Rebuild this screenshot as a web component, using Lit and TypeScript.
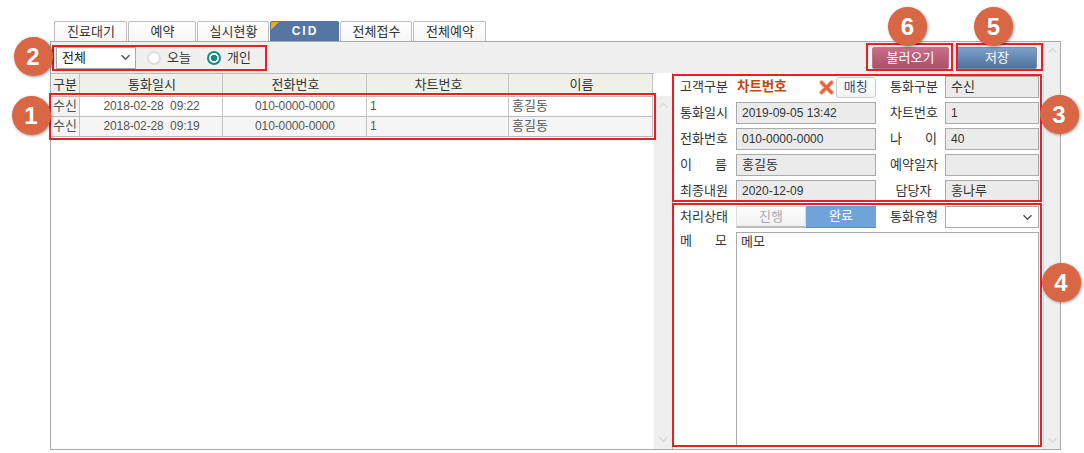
import { LitElement, html, css } from "lit";
import { customElement } from "lit/decorators.js";

const chev = (c: string) => html`<svg class="chev" width="11" height="7" viewBox="0 0 11 7"><path d="M1.5 1.2 5.5 5.2 9.5 1.2" fill="none" stroke="${c}" stroke-width="1.5"/></svg>`;
const chevUp = (c: string) => html`<svg class="chev" width="11" height="7" viewBox="0 0 11 7"><path d="M1.5 5.5 5.5 1.5 9.5 5.5" fill="none" stroke="${c}" stroke-width="1.3"/></svg>`;

const TABS = [["진료대기", 73], ["예약", 68], ["실시현황", 72], ["CID", 69], ["전체접수", 72], ["전체예약", 73]] as const;
const ROWS = [["수신", "2018-02-28  09:22", "010-0000-0000", "1", "홍길동"], ["수신", "2018-02-28  09:19", "010-0000-0000", "1", "홍길동"]];
const BOXES = [[49, 93, 607, 47], [52, 45, 215, 26], [672, 74, 370, 128], [672, 203, 370, 244], [956, 43, 87, 28], [866, 43, 87, 28]];
const DOTS = [[1, 31, 115], [2, 33, 56], [3, 1059, 114], [4, 1061, 282], [5, 993.5, 26], [6, 907.5, 26]];

@customElement("app-root")
export class AppRoot extends LitElement {
  static styles = css`
    :host { display: block; position: relative; width: 1084px; height: 453px; background: #fff; overflow: hidden;
      font: 13px/16px "Liberation Sans", "Noto Sans CJK KR", sans-serif; color: #333; }
    .tabs { display: flex; gap: 1px; padding: 21px 0 0 54px; height: 20px; }
    .tab { box-sizing: border-box; height: 20px; border: 1px solid #bdbdbd; border-bottom: 0; border-radius: 2px 2px 0 0; padding-left: 1px;
      background: linear-gradient(#fff, #f6f6f6); text-align: center; line-height: 19px; color: #333; position: relative; }
    .tab.on { background: #5676a2; border-color: #5676a2; color: #fff; font-size: 12px; font-weight: 700; letter-spacing: 2px; overflow: hidden; }
    .tri { position: absolute; left: -1px; top: -1px; width: 0; height: 0; border-top: 10px solid #eeaa22; border-right: 10px solid transparent; }
    .panel { box-sizing: border-box; display: flex; width: 1011px; height: 409px; margin-left: 50px; border: 1px solid #aaa; }
    .main { flex: 1; display: flex; flex-direction: column; min-width: 0; }
    .vbar { width: 17px; background: #efefef; border-left: 1px solid #d8d8d8; display: flex; flex-direction: column; justify-content: space-between; align-items: center; padding: 5px 0 5px; box-sizing: border-box; }
    .toolbar { height: 31px; background: #f0f0f0; display: flex; align-items: center; padding: 0 0 0 5px; box-sizing: border-box; }
    .sel { box-sizing: border-box; width: 80px; height: 22px; background: #fff; border: 1px solid #aaa; display: flex; align-items: center; justify-content: space-between; padding: 0 4px 0 5px; color: #222; }
    .radio { display: flex; align-items: center; gap: 6px; color: #333; }
    .r1 { margin-left: 11px; }
    .r2 { margin-left: 16px; }
    .dot { box-sizing: border-box; width: 14px; height: 14px; border-radius: 50%; border: 2px solid #dcdcdc; background: #fff; }
    .dot.on { border: 2px solid #138a86; background: radial-gradient(circle, #138a86 0 3px, #fff 3.5px); }
    .spacer { flex: 1; }
    .btn { box-sizing: border-box; height: 22px; border-radius: 2px; color: #fff; text-align: center; line-height: 20px; border: 1px solid #aaa; }
    .pink { width: 77px; background: linear-gradient(#cb6c88, #ac4f6b); border-color: #b5778a; }
    .blue { width: 80px; margin-left: 8px; margin-right: 6px; background: linear-gradient(#7ba0c9, #4f729e); border-color: #7c8fa8; }
    .body { flex: 1; display: flex; min-height: 0; }
    .list { width: 621px; display: flex; }
    .gridwrap { width: 603px; border-top: 1px solid #bbb; }
    .row { display: grid; grid-template-columns: 29px 143px 144px 142px 144px; }
    .row > div { box-sizing: border-box; border-right: 1px solid #c4c4c4; border-bottom: 1px solid #bbb; height: 20px; line-height: 18px; padding: 0 1px; text-align: center; color: #555; white-space: pre; }
    .row .n { font-size: 12px; letter-spacing: -0.12px; padding-left: 2px; }
    .row .l { text-align: left; padding-left: 3px; }
    .row .first { background: #f3f3f3; border-left: 0; padding: 0; }
    .row.alt > div { background: #f5f5f5; }
    .row.head > div { height: 23px; line-height: 21px; background: #eff0e9; color: #333; padding: 0 0 0 2px; }
    .row.head > div:first-child { padding: 0; }
    .lbar { width: 18px; margin-top: 23px; background: #efefef; display: flex; flex-direction: column; justify-content: space-between; align-items: center; padding: 6px 0 6px; box-sizing: border-box; }
    .form { box-sizing: border-box; flex: 1; border-left: 1px solid #aaa; display: grid; grid-template-columns: 63px 140px 69px 94px; grid-template-rows: 22px 22px 22px 22px 22px 22px 1fr; row-gap: 4px; padding: 3px 0 3px; align-items: center; }
    .lab { width: 47px; margin-left: 7px; text-align-last: justify; color: #333; white-space: nowrap; }
    .lab.rt { margin-left: 14px; }
    .lab.c { text-align-last: center; }
    .lab.top { align-self: start; margin-top: 1px; }
    .f { box-sizing: border-box; height: 22px; border: 1px solid #aaa; background: #ebebeb; line-height: 19px; padding: 0 5px; color: #333; }
    .f.n { font-size: 12px; line-height: 20px; }
    .w { background: #fff; display: flex; align-items: center; justify-content: flex-end; }
    .cust { display: flex; align-items: center; }
    .cust b { color: #c0490c; font-size: 13.5px; white-space: nowrap; margin-left: 1px; }
    .cust svg { margin-left: 32px; }
    .match { box-sizing: border-box; margin-left: 2px; width: 40px; height: 21px; border: 1px solid #ccc; border-radius: 3px; background: linear-gradient(#fff, #f4f4f4); color: #2a4a7e; text-align: center; line-height: 18px; }
    .toggle { display: flex; height: 22px; }
    .toggle div { width: 70px; box-sizing: border-box; text-align: center; line-height: 20px; }
    .off { background: linear-gradient(#fff, #f0f0f0); border: 1px solid #ddd; border-bottom: 2px solid #bbb; color: #aaa; }
    .act { background: #70a3da; color: #fff; border-bottom: 1px solid #5b8fc8; }
    .memo { grid-column: 2 / 5; box-sizing: border-box; align-self: stretch; border: 1px solid #aaa; background: #fff; padding: 0 4px; line-height: 17px; }
    .box { position: absolute; box-sizing: border-box; border: 2px solid #ee1c25; pointer-events: none; }
    .badge { position: absolute; width: 39px; height: 39px; margin: -19.5px 0 0 -19.5px; border-radius: 50%; background: #d96644; box-shadow: 1px 1px 3px rgba(0,0,0,.4); color: #fff; font: 700 24px/39px "Liberation Sans", sans-serif; text-align: center; }
  `;

  render() {
    return html`
      <div class="tabs">
        ${TABS.map(([t, w]) => html`<div class="tab ${t === "CID" ? "on" : ""}" style="width:${w}px">${t === "CID" ? html`<span class="tri"></span>` : ""}${t}</div>`)}
      </div>
      <div class="panel">
        <div class="main">
          <div class="toolbar">
            <div class="sel"><span>전체</span>${chev("#555")}</div>
            <div class="radio r1"><span class="dot"></span>오늘</div>
            <div class="radio r2"><span class="dot on"></span>개인</div>
            <div class="spacer"></div>
            <div class="btn pink">불러오기</div>
            <div class="btn blue">저장</div>
          </div>
          <div class="body">
            <div class="list">
              <div class="gridwrap">
                <div class="row head"><div>구분</div><div>통화일시</div><div>전화번호</div><div>차트번호</div><div>이름</div></div>
                ${ROWS.map((r, i) => html`<div class="row ${i ? "alt" : ""}">
                  <div class="first">${r[0]}</div><div class="n">${r[1]}</div><div class="n">${r[2]}</div><div class="l n">${r[3]}</div><div class="l">${r[4]}</div></div>`)}
              </div>
              <div class="lbar">${chevUp("#d8d8d8")}${chev("#d8d8d8")}</div>
            </div>
            <div class="form">
              <div class="lab">고객구분</div>
              <div class="cust"><b>차트번호</b>
                <svg width="15" height="15" viewBox="0 0 15 15"><path d="M2.5 2.5 12.5 12.5M12.5 2.5 2.5 12.5" stroke="#f4bba6" stroke-width="4.6" stroke-linecap="round"/><path d="M2.5 2.5 12.5 12.5M12.5 2.5 2.5 12.5" stroke="#e5613b" stroke-width="2.8" stroke-linecap="round"/></svg>
                <div class="match">매칭</div></div>
              <div class="lab rt">통화구분</div><div class="f">수신</div>
              <div class="lab">통화일시</div><div class="f n">2019-09-05 13:42</div>
              <div class="lab rt">차트번호</div><div class="f n">1</div>
              <div class="lab">전화번호</div><div class="f n">010-0000-0000</div>
              <div class="lab rt">나 이</div><div class="f n">40</div>
              <div class="lab">이 름</div><div class="f">홍길동</div>
              <div class="lab rt">예약일자</div><div class="f"></div>
              <div class="lab">최종내원</div><div class="f n">2020-12-09</div>
              <div class="lab rt c">담당자</div><div class="f">홍나루</div>
              <div class="lab">처리상태</div>
              <div class="toggle"><div class="off">진행</div><div class="act">완료</div></div>
              <div class="lab rt">통화유형</div><div class="f w">${chev("#555")}</div>
              <div class="lab top">메 모</div><div class="memo">메모</div>
            </div>
          </div>
        </div>
        <div class="vbar">${chevUp("#d8d8d8")}${chev("#d8d8d8")}</div>
      </div>
      ${BOXES.map(([x, y, w, h]) => html`<div class="box" style="left:${x}px;top:${y}px;width:${w}px;height:${h}px"></div>`)}
      ${DOTS.map(([n, x, y]) => html`<div class="badge" style="left:${x}px;top:${y}px">${n}</div>`)}
    `;
  }
}
